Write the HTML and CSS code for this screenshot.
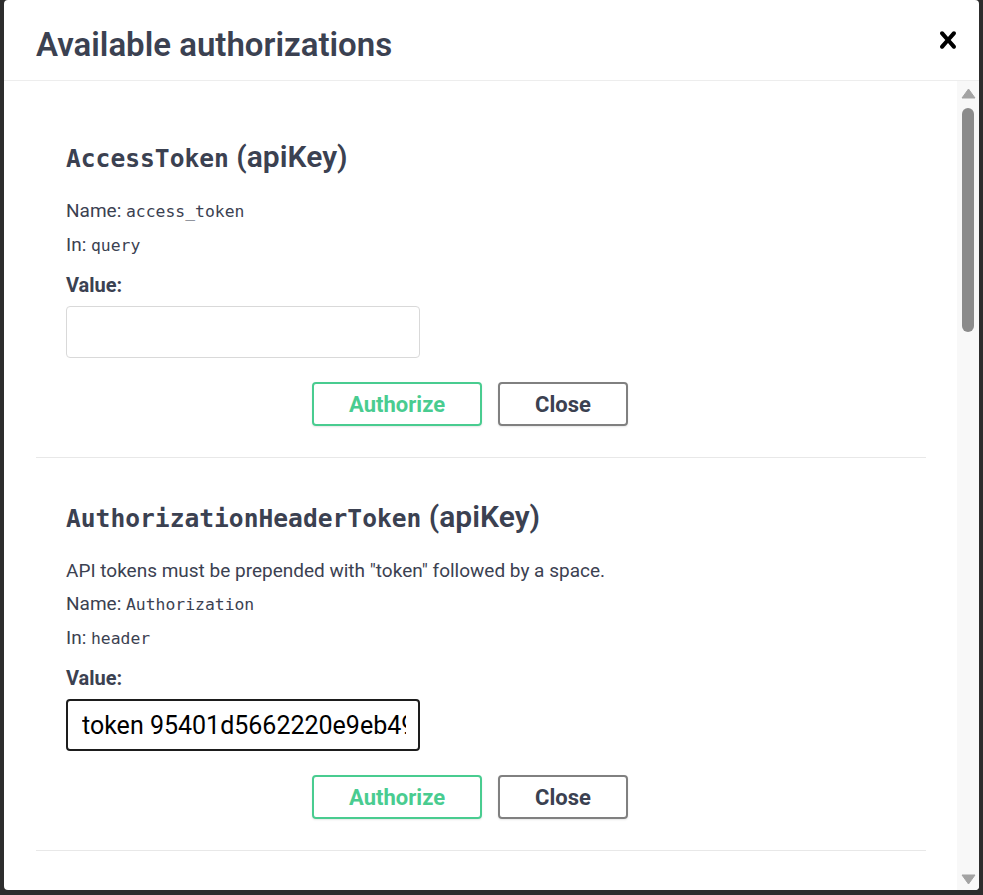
FILE: index.html
```html
<!DOCTYPE html>
<html lang="en">
<head>
    <meta charset="UTF-8">
    <title>Gitea API</title>
    <link rel="stylesheet" href="styles.css">
</head>
<body>
    <div class="modal">
        <div class="modal-header">
            <h3>Available authorizations</h3>
            <button class="close-modal" aria-label="Close">
                <svg width="34" height="34" viewBox="0 0 20 20"><path d="M14.348 14.849c-.469.469-1.229.469-1.697 0L10 11.819l-2.651 3.029c-.469.469-1.229.469-1.697 0-.469-.469-.469-1.229 0-1.697l2.758-3.15-2.759-3.152c-.469-.469-.469-1.228 0-1.697.469-.469 1.228-.469 1.697 0L10 8.183l2.651-3.031c.469-.469 1.228-.469 1.697 0 .469.469.469 1.229 0 1.697l-2.758 3.152 2.758 3.15c.469.469.469 1.229 0 1.698z"/></svg>
            </button>
        </div>

        <div class="modal-body">
            <div class="modal-content">
                <div class="auth-container">
                    <h4><code>AccessToken</code> (apiKey)</h4>
                    <p>Name: <code>access_token</code></p>
                    <p>In: <code>query</code></p>
                    <label>Value:</label>
                    <input type="text">
                    <div class="auth-btn-wrapper">
                        <button class="btn authorize">Authorize</button>
                        <button class="btn btn-done">Close</button>
                    </div>
                </div>

                <div class="auth-container">
                    <h4><code>AuthorizationHeaderToken</code> (apiKey)</h4>
                    <p>API tokens must be prepended with "token" followed by a space.</p>
                    <p>Name: <code>Authorization</code></p>
                    <p>In: <code>header</code></p>
                    <label>Value:</label>
                    <input type="text" class="active" value="token 95401d5662220e9eb49">
                    <div class="auth-btn-wrapper">
                        <button class="btn authorize">Authorize</button>
                        <button class="btn btn-done">Close</button>
                    </div>
                </div>
            </div>

            <!-- 오른쪽 스크롤바 -->
            <div class="scrollbar">
                <div class="scroll-arrow up">
                    <svg width="15" height="11" viewBox="0 0 15 11"><path d="M7.5 1 14 10H1z"/></svg>
                </div>
                <div class="scroll-track">
                    <div class="scroll-thumb"></div>
                </div>
                <div class="scroll-arrow down">
                    <svg width="15" height="11" viewBox="0 0 15 11"><path d="M1 1h13L7.5 10z"/></svg>
                </div>
            </div>
        </div>
    </div>
</body>
</html>
```

FILE: styles.css
```css
html, body {
    height: 100%;
}

body {
    margin: 0;
    padding: 0 4px;
    box-sizing: border-box;
    overflow: hidden;
    background-color: #2d2d2d; /* 모달 뒤 어두운 배경 */
    font-family: Roboto, "Open Sans", sans-serif;
    color: #3b4151;
}

.modal {
    height: 890px;
    background: white;
    border-radius: 4px;
    display: flex;
    flex-direction: column;
    overflow: hidden;
}

/* 상단 제목 줄 */
.modal-header {
    flex-shrink: 0;
    height: 80px;
    display: flex;
    align-items: center;
    justify-content: space-between;
    padding: 0 14px 0 32px;
    border-bottom: 1px solid #ededed;
}

.modal-header h3 {
    margin: 0;
    padding-top: 8px;
    font-size: 33px;
    font-weight: 600;
}

.close-modal {
    width: 34px;
    height: 34px;
    padding: 0;
    border: none;
    background: none;
    cursor: pointer;
}

.close-modal svg {
    display: block;
    fill: #000;
}

/* 내용 + 스크롤바 */
.modal-body {
    flex: 1;
    min-height: 0;
    display: flex;
}

.modal-content {
    flex: 1;
    overflow: hidden;
    padding-top: 17px;
}

.scrollbar {
    width: 22px;
    flex-shrink: 0;
    display: flex;
    flex-direction: column;
    background-color: #f8f8f8;
}

.scroll-arrow {
    height: 22px;
    display: flex;
    justify-content: center;
    align-items: center;
}

.scroll-arrow.up {
    padding-top: 3px;
    box-sizing: border-box;
}

.scroll-arrow svg {
    display: block;
    fill: #a3a3a3;
    stroke: #a3a3a3;
    stroke-linejoin: round;
}

.scroll-track {
    flex: 1;
    padding-top: 5px;
    display: flex;
    justify-content: center;
}

.scroll-thumb {
    width: 12px;
    height: 224px;
    border-radius: 6px;
    background-color: #8b8b8b;
}

/* 인증 방식 하나씩 */
.auth-container {
    margin: 0 31px 0 32px;
    padding: 41px 30px 31px;
    border-bottom: 1px solid #e8e8e8;
}

.auth-container h4 {
    margin: 0 0 17px;
    font-size: 30px;
    line-height: 36px;
    font-weight: 600;
}

.auth-container h4 code {
    font-family: "DejaVu Sans Mono", monospace;
    font-size: 24.6px;
    font-weight: 700;
}

.auth-container p {
    margin: 0;
    font-size: 19px;
    line-height: 33px;
}

.auth-container p code {
    font-family: "DejaVu Sans Mono", monospace;
    font-size: 16.4px;
}

.auth-container label {
    display: block;
    margin-top: 7px;
    font-size: 20px;
    line-height: 33px;
    font-weight: 700;
}

.auth-container input {
    display: block;
    width: 354px;
    height: 52px;
    box-sizing: border-box;
    margin-top: 4px;
    padding: 0 12px 0 15px;
    border: 1px solid #d9d9d9;
    border-radius: 4px;
    font-family: Roboto, "Open Sans", sans-serif;
    font-size: 25px;
    color: #000;
    outline: none;
}

/* 입력 중인 칸 */
.auth-container input.active {
    border: 2px solid #1d1d1d;
    padding-left: 14px;
}

.auth-btn-wrapper {
    display: flex;
    justify-content: center;
    gap: 16px;
    padding-right: 22px;
    margin-top: 24px;
}

.btn {
    height: 44px;
    padding: 0 35px;
    border: 2px solid #808080;
    border-radius: 4px;
    background: transparent;
    box-shadow: 0 1px 2px rgba(0, 0, 0, 0.1);
    font-family: Roboto, "Open Sans", sans-serif;
    font-size: 22px;
    font-weight: 700;
    color: #3b4151;
    cursor: pointer;
}

.btn.authorize {
    border-color: #49cc90;
    color: #49cc90;
}
```
